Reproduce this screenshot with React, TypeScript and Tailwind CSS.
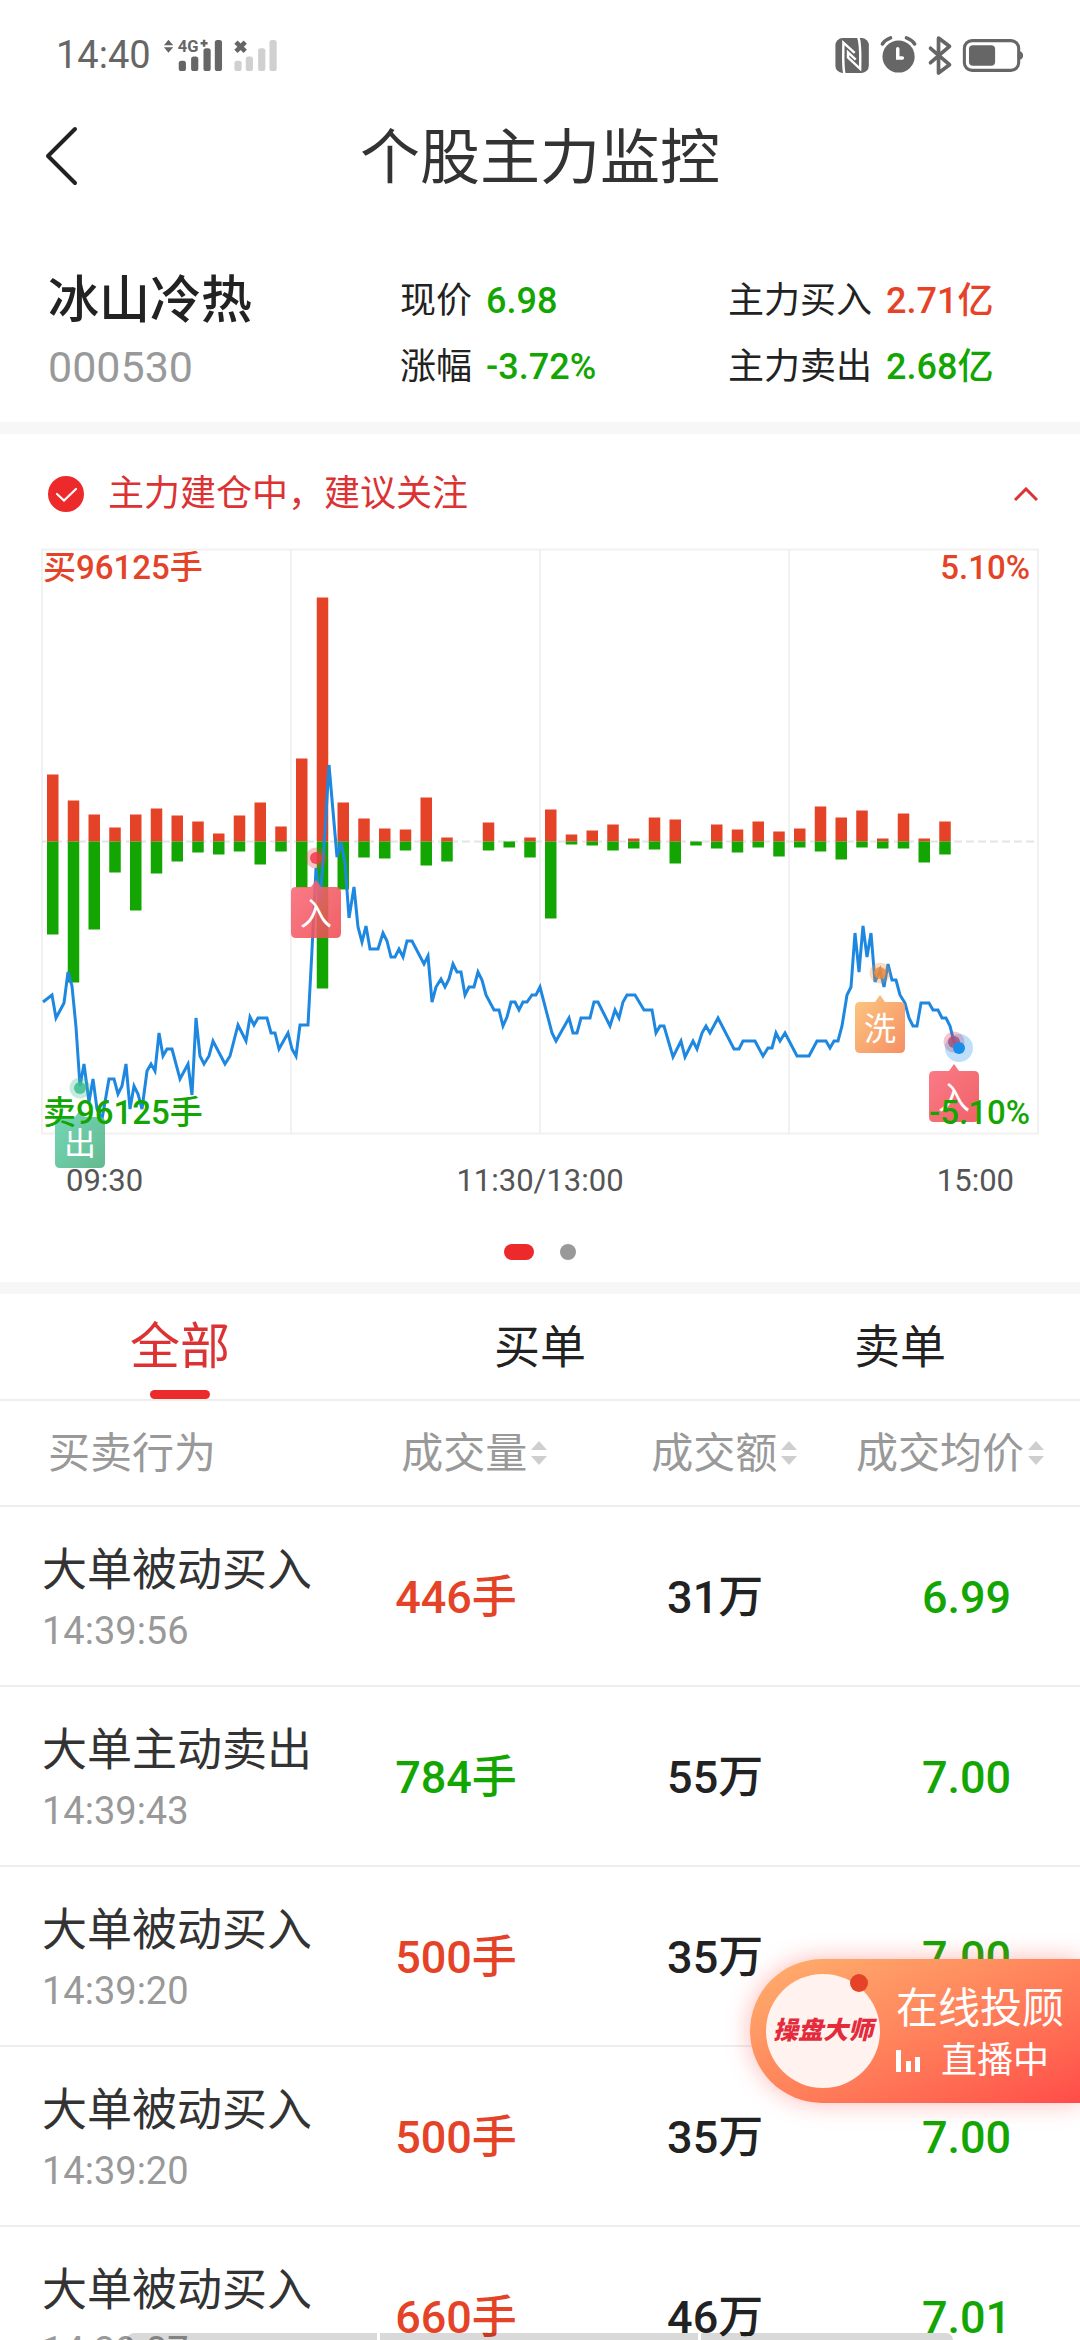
import { useState } from 'react';
import { clsx } from 'clsx';

type Order = {
  id: number;
  action: string;
  time: string;
  volume: string;
  side: 'buy' | 'sell';
  amount: string;
  price: string;
};

const orders: Order[] = [
  { id: 1, action: '大单被动买入', time: '14:39:56', volume: '446手', side: 'buy', amount: '31万', price: '6.99' },
  { id: 2, action: '大单主动卖出', time: '14:39:43', volume: '784手', side: 'sell', amount: '55万', price: '7.00' },
  { id: 3, action: '大单被动买入', time: '14:39:20', volume: '500手', side: 'buy', amount: '35万', price: '7.00' },
  { id: 4, action: '大单被动买入', time: '14:39:20', volume: '500手', side: 'buy', amount: '35万', price: '7.00' },
  { id: 5, action: '大单被动买入', time: '14:39:07', volume: '660手', side: 'buy', amount: '46万', price: '7.01' },
];

// [buy, sell] per 5 minutes
const volumes = [
  [67, 93], [41, 141], [27, 88], [14, 31], [27, 69], [33, 32], [26, 20], [20, 11],
  [8, 13], [26, 10], [39, 23], [15, 10], [83, 46], [244, 147], [39, 48], [23, 16],
  [13, 17], [12, 9], [44, 24], [4, 20], [0, 0], [19, 9], [0, 6], [4, 16],
  [32, 77], [7, 3], [11, 4], [17, 9], [3, 7], [24, 8], [22, 22], [0, 4],
  [17, 7], [12, 11], [20, 6], [10, 15], [13, 6], [35, 10], [24, 18], [31, 6],
  [3, 7], [28, 7], [3, 21], [20, 13],
];

const priceLine =
  '43,462 52,455 56,478 64,463 68,432 72,446 76,487 80,546 84,524 89,562 93,539 97,569 102,579 105,562 109,539 114,539 ' +
  '118,554 122,546 126,524 130,569 134,546 138,554 142,569 147,531 151,524 155,531 159,493 163,516 167,509 172,509 ' +
  '180,539 188,524 192,555 196,478 200,516 204,524 209,516 213,501 225,524 230,516 238,485 246,501 250,477 254,485 ' +
  '258,478 267,478 271,493 275,493 279,509 288,493 292,509 296,516 300,485 308,485 312,410 316,328 320,362 324,307 ' +
  '329,225 337,317 341,302 345,323 349,378 354,347 358,387 362,402 366,386 370,409 378,409 383,393 387,401 391,417 ' +
  '395,417 399,409 403,417 407,401 412,401 424,424 428,416 432,462 436,447 441,439 445,447 449,439 453,424 457,432 ' +
  '461,432 465,455 469,447 474,447 478,432 482,440 486,455 494,470 499,470 503,486 507,477 511,462 515,462 519,470 ' +
  '523,462 527,462 532,455 536,455 540,447 552,493 556,501 569,478 573,493 577,493 581,478 590,478 594,462 598,462 ' +
  '610,486 615,470 619,478 623,462 627,455 635,455 644,470 652,470 656,493 660,486 664,486 673,517 681,501 685,517 ' +
  '693,501 697,509 702,493 706,486 710,493 718,478 734,509 739,509 743,501 755,501 763,516 768,508 772,508 776,493 ' +
  '780,501 785,493 797,516 809,516 817,501 826,501 830,508 834,501 838,501 842,486 847,455 851,447 855,393 859,432 ' +
  '863,386 867,417 871,393 875,442 880,430 884,447 888,424 892,440 896,440 900,455 905,463 909,478 913,486 917,486 ' +
  '921,463 929,463 933,470 938,470 942,478 946,478 950,486 954,502 959,508';

function StatusBar() {
  return (
    <div className="flex h-[110px] shrink-0 items-center justify-between px-14 text-[#666]">
      <div className="flex items-center gap-3">
        <span className="text-[38px] leading-10">14:40</span>
        <svg width="116" height="33" viewBox="0 0 112 32" fill="currentColor">
          <path d="M5 .7 9.7 6H.7zM5 13.3 9.7 8H.7z" />
          <text x="14" y="13" fontSize="16" fontWeight="700">4G</text>
          <path d="M38.4 .7h2.4v2.2H43v2.4h-2.2v2.2h-2.4V5.3h-2.2V2.9h2.2z" />
          <rect x="15" y="21" width="7" height="10" rx="2.5" />
          <rect x="27" y="17" width="7" height="14" rx="2.5" />
          <rect x="39" y="9" width="7" height="22" rx="2.5" />
          <rect x="50" y="1" width="7" height="30" rx="2.5" />
          <path d="M70.5 3 79.5 12M79.5 3 70.5 12" stroke="currentColor" strokeWidth="4.5" />
          <g fill="#d0d0d0">
            <rect x="69" y="21" width="7" height="10" rx="2.5" />
            <rect x="80" y="17" width="7" height="14" rx="2.5" />
            <rect x="92" y="9" width="7" height="22" rx="2.5" />
            <rect x="103" y="1" width="7" height="30" rx="2.5" />
          </g>
        </svg>
      </div>
      <svg width="190" height="41" viewBox="0 0 184 40" fill="none" stroke="currentColor">
        <rect x=".7" y="3" width="32.6" height="34" rx="7" fill="currentColor" stroke="none" />
        <path d="M9.5 38c-1.8-8-1.2-16-1-30.5L19.5 17.5M23 2c2.6 7 2 16 1.8 31L13 22V17L20.5 24" stroke="#fff" strokeWidth="2.4" />
        <circle cx="62.3" cy="21" r="15.7" fill="currentColor" stroke="none" />
        <path d="M46.5 8.8c2-3 4.5-4.8 8-6M78 8.8c-2-3-4.5-4.8-8-6" strokeWidth="3.4" strokeLinecap="round" />
        <path d="M61.5 13.5V22.5H66" stroke="#fff" strokeWidth="3.4" strokeLinecap="round" />
        <path d="M93.5 13 112 29 101.3 37V3L112 11 93.5 27" strokeWidth="3.6" strokeLinecap="round" strokeLinejoin="round" />
        <rect x="126.5" y="5.5" width="53" height="29" rx="7.5" strokeWidth="3" />
        <rect x="131" y="10" width="25.5" height="20" rx="4" fill="currentColor" stroke="none" />
        <path d="M181 16.5c3 1 3 6 0 7z" fill="currentColor" strokeWidth="1" />
      </svg>
    </div>
  );
}

function Metric({ label, value, up }: { label: string; value: string; up?: boolean }) {
  return (
    <p className="whitespace-nowrap text-4xl leading-[66px]">
      {label}
      <span className={clsx('ml-3.5 font-medium', up ? 'text-[#e54327]' : 'text-[#13a603]')}>{value}</span>
    </p>
  );
}

// x / y: position of the dot, top: upper edge of the label box
function Marker({ x, y, top, text, fill, dot }: {
  x: number;
  y: number;
  top: number;
  text: string;
  fill: string;
  dot: string;
}) {
  return (
    <g>
      <circle cx={x} cy={y} r="10.5" fill={dot} opacity="0.3" />
      <circle cx={x} cy={y} r="6" fill={dot} opacity="0.85" />
      <path
        d={`M${x - 20} ${top}h15l5-7 5 7h15q5 0 5 5v41q0 5-5 5h-40q-5 0-5-5v-41q0-5 5-5z`}
        fill={fill}
        opacity="0.88"
      />
      <text x={x} y={top + 38} textAnchor="middle" fontSize="32" fill="#fff">{text}</text>
    </g>
  );
}

function Chart() {
  return (
    <svg viewBox="0 0 1080 596" className="block w-full overflow-visible">
      <defs>
        <linearGradient id="in" x1="0" y1="0" x2="1" y2="1">
          <stop offset="0" stopColor="#fa6a78" />
          <stop offset="1" stopColor="#ee4c52" />
        </linearGradient>
        <linearGradient id="out" x1="0" y1="0" x2="1" y2="1">
          <stop offset="0" stopColor="#62d3b0" />
          <stop offset="1" stopColor="#4fb080" />
        </linearGradient>
        <linearGradient id="wash" x1="0" y1="0" x2="1" y2="1">
          <stop offset="0" stopColor="#fbc06f" />
          <stop offset="1" stopColor="#f5804f" />
        </linearGradient>
      </defs>

      <path d="M42 9.5H1038V593.5H42zM291 9.5V593.5M540 9.5V593.5M789 9.5V593.5" fill="none" stroke="#f1f1f1" strokeWidth="2" />
      <path d="M42 301.5H1036" stroke="#e4e4e4" strokeWidth="2" strokeDasharray="8 4" />

      {volumes.map(([buy, sell], i) => (
        <g key={i}>
          <rect x={47 + i * 20.75} y={301.5 - buy} width="11.5" height={buy} fill="#e54327" />
          <rect x={47 + i * 20.75} y={301.5} width="11.5" height={sell} fill="#13a603" />
        </g>
      ))}

      <polyline points={priceLine} fill="none" stroke="#1e88e0" strokeWidth="3" />

      <Marker x={80} y={548} top={577} text="出" fill="url(#out)" dot="#3dbd8d" />
      <Marker x={316} y={318} top={347} text="入" fill="url(#in)" dot="#f03a48" />
      <Marker x={880} y={433} top={462} text="洗" fill="url(#wash)" dot="#ef8a3a" />
      <Marker x={954} y={502} top={531} text="入" fill="url(#in)" dot="#e03a50" />
      <circle cx="959" cy="508" r="14" fill="#1a8de8" opacity="0.28" />
      <circle cx="959" cy="508" r="6" fill="#1a8de8" />

      <g fontSize="33" fontWeight="500">
        <text x="43" y="39" fill="#e54327">买96125手</text>
        <text x="1030" y="39" fill="#e54327" textAnchor="end">5.10%</text>
        <text x="43" y="584" fill="#13a603">卖96125手</text>
        <text x="1030" y="584" fill="#13a603" textAnchor="end">-5.10%</text>
      </g>
    </svg>
  );
}

function SortButton({ label }: { label: string }) {
  return (
    <button type="button" className="inline-flex items-center gap-1 whitespace-nowrap">
      {label}
      <svg width="16" height="24" viewBox="0 0 16 24" fill="#cfcfcf">
        <path d="M8 0 16 9H0zM8 24 16 15H0z" />
      </svg>
    </button>
  );
}

function Advisor() {
  return (
    <a
      href="#live"
      className="absolute bottom-[237px] right-0 flex h-36 w-[330px] items-center gap-4 rounded-l-full bg-linear-to-br from-[#ffb06e] to-[#ff4b49] pl-4 text-white shadow-[0_0_24px_rgba(255,80,74,0.4)]"
    >
      <span className="relative flex size-[114px] shrink-0 items-center justify-center rounded-full bg-[#fff2ef]">
        <span className="whitespace-nowrap text-[25px] font-black italic text-[#e32b3c]">操盘大师</span>
        <span className="absolute right-3 top-0 size-[18px] rounded-full bg-[#e54327]" />
      </span>
      <span className="flex flex-col whitespace-nowrap pt-1.5">
        <span className="text-[42px] leading-[54px]">在线投顾</span>
        <span className="flex items-center gap-5 text-4xl leading-[50px]">
          <svg width="25" height="22" viewBox="0 0 25 22" fill="#fff">
            <path d="M0 0h5v22H0zM10 11h5v11h-5zM19 7h5v15h-5z" />
          </svg>
          直播中
        </span>
      </span>
    </a>
  );
}

const tabs = ['全部', '买单', '卖单'];

export default function App() {
  const [tab, setTab] = useState('全部');
  const [open, setOpen] = useState(true);

  return (
    <div className="relative flex h-screen flex-col overflow-hidden bg-white text-[#222] [font-family:Roboto,'Noto_Sans_CJK_SC',sans-serif]">
      <StatusBar />

      <header className="grid h-[92px] shrink-0 grid-cols-[1fr_auto_1fr] items-center px-11">
        <button type="button" aria-label="返回" className="justify-self-start">
          <svg width="36" height="62" viewBox="0 0 36 62" fill="none" stroke="#222" strokeWidth="4" strokeLinecap="round" strokeLinejoin="round">
            <path d="M31 4 4 31 31 58" />
          </svg>
        </button>
        <h1 className="pt-1.5 text-6xl text-[#333]">个股主力监控</h1>
      </header>

      <section className="grid shrink-0 grid-cols-[352fr_328fr_304fr] px-12 pb-[22px] pt-[66px]">
        <div>
          <h2 className="text-[51px] font-medium leading-[66px]">冰山冷热</h2>
          <p className="text-[43px] leading-[66px] text-[#999]">000530</p>
        </div>
        <div>
          <Metric label="现价" value="6.98" />
          <Metric label="涨幅" value="-3.72%" />
        </div>
        <div>
          <Metric label="主力买入" value="2.71亿" up />
          <Metric label="主力卖出" value="2.68亿" />
        </div>
      </section>

      <section className="shrink-0 border-y-12 border-[#f7f7f7]">
        <button
          type="button"
          onClick={() => setOpen(!open)}
          className="flex h-[106px] w-full items-center gap-6 pl-12 pr-[42px] pt-3.5 text-4xl text-[#dc3233]"
        >
          <svg width="36" height="36" viewBox="0 0 36 36" fill="none">
            <circle cx="18" cy="18" r="18" fill="#ec2a2b" />
            <path d="M9 18 16 24.5 28 13" stroke="#fff" strokeWidth="2.2" strokeLinecap="round" />
          </svg>
          主力建仓中，建议关注
          <svg className={clsx('ml-auto', !open && 'rotate-180')} width="24" height="14" viewBox="0 0 24 14" fill="none" stroke="currentColor" strokeWidth="3">
            <path d="M1 13 12 2 23 13" />
          </svg>
        </button>
        {open && (
          <>
            <Chart />
            <div className="flex h-[90px] items-center justify-between px-[66px] text-[31px] text-[#555]">
              <span>09:30</span>
              <span>11:30/13:00</span>
              <span>15:00</span>
            </div>
            <div className="flex h-14 items-center justify-center gap-[26px] pb-1">
              <span className="h-4 w-[30px] rounded-full bg-[#ec2a2b]" />
              <span className="size-4 rounded-full bg-[#999]" />
            </div>
          </>
        )}
      </section>

      <nav className="grid h-[107px] shrink-0 grid-cols-3 border-b-2 border-[#eee]">
        {tabs.map((t) => (
          <button
            key={t}
            type="button"
            onClick={() => setTab(t)}
            className={clsx('flex flex-col items-center', t === tab ? 'text-[50px] text-[#dc3233]' : 'text-[46px]')}
          >
            <span className="flex h-24 items-center pt-2.5">{t}</span>
            {t === tab && <span className="h-[9px] w-15 rounded-full bg-[#ec2a2b]" />}
          </button>
        ))}
      </nav>

      <main className="min-h-0 flex-1 overflow-hidden">
        <table className="w-full table-fixed border-separate border-spacing-0">
          <thead className="text-[42px] text-[#999]">
            <tr className="h-[106px] [&>th]:border-b-2 [&>th]:border-[#eee] [&>th]:font-normal">
              <th className="w-[31%] pl-12 text-left">买卖行为</th>
              <th className="w-[23%] pr-9 text-right"><SortButton label="成交量" /></th>
              <th className="w-[25%] pr-14 text-right"><SortButton label="成交额" /></th>
              <th className="w-[21%] pr-9"><div className="flex justify-end"><SortButton label="成交均价" /></div></th>
            </tr>
          </thead>
          <tbody className="text-[45px]">
            {orders.map((o) => (
              <tr key={o.id} className="h-[180px] text-center [&>td]:border-b-2 [&>td]:border-[#eee]">
                <td className="pl-[42px] pt-2.5 text-left">
                  <p className="whitespace-nowrap leading-[60px] text-[#333]">{o.action}</p>
                  <p className="text-[38px] leading-[60px] text-[#999]">{o.time}</p>
                </td>
                <td className={clsx('pr-1.5 pt-1 font-medium', o.side === 'buy' ? 'text-[#e54327]' : 'text-[#13a603]')}>{o.volume}</td>
                <td className="pr-1.5 pt-1 font-medium">{o.amount}</td>
                <td className="pt-1 font-medium text-[#13a603]">{o.price}</td>
              </tr>
            ))}
          </tbody>
        </table>
      </main>

      <Advisor />

      <div className="absolute inset-x-[127px] bottom-0 grid h-[7px] grid-cols-[251fr_320fr_253fr] gap-[3px] overflow-hidden rounded-t-lg">
        <span className="bg-black/15" />
        <span className="bg-black/15" />
        <span className="bg-black/15" />
      </div>
    </div>
  );
}
